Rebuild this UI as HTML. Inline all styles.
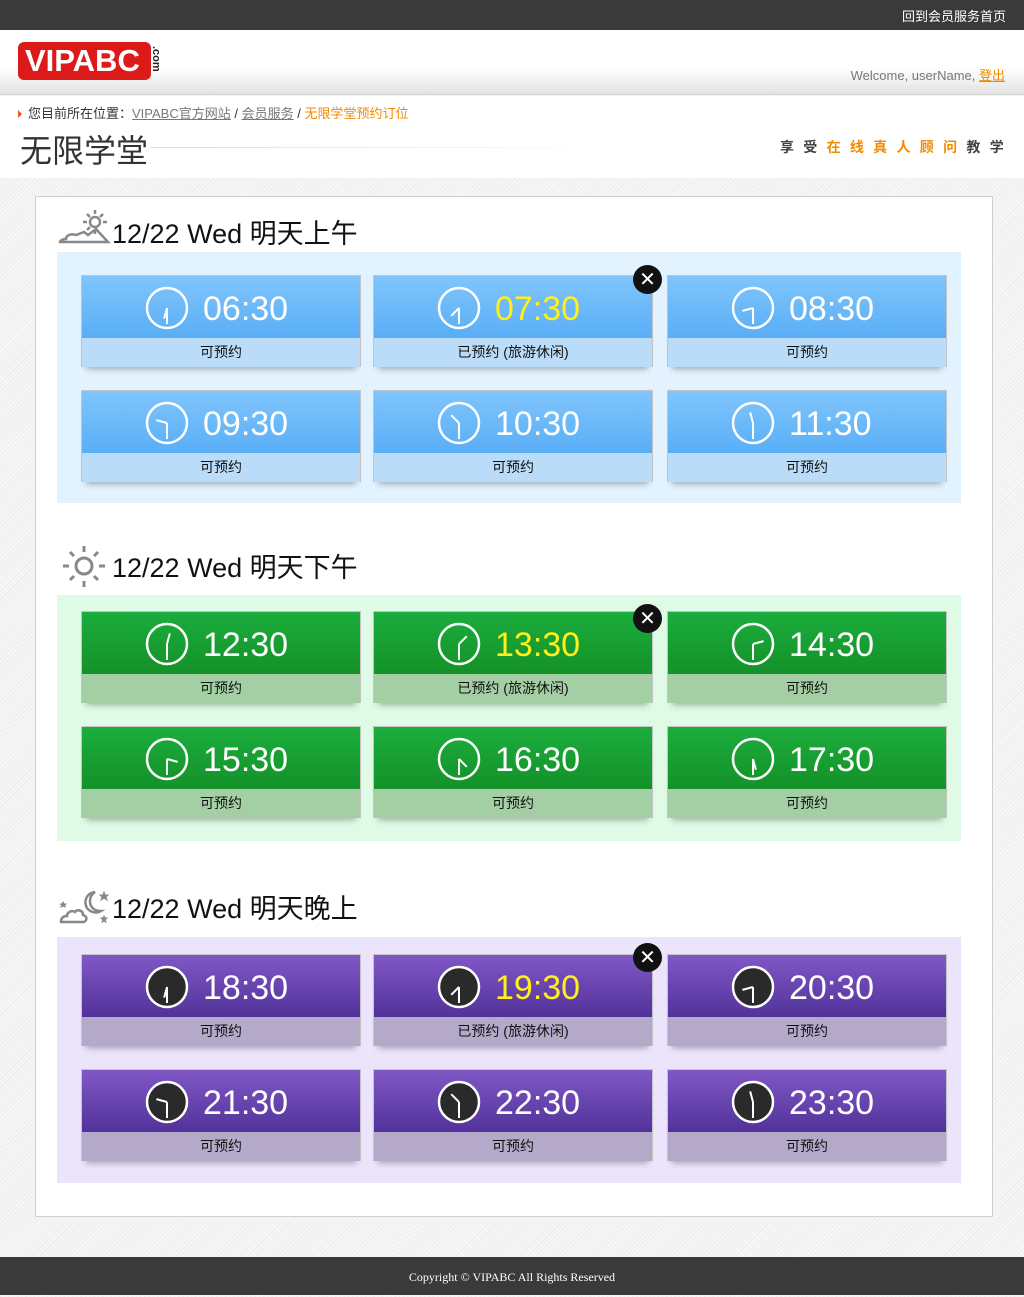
<!DOCTYPE html>
<html><head><meta charset="utf-8"><style>
*{margin:0;padding:0;box-sizing:border-box}
body{width:1024px;height:1295px;position:relative;font-family:"Liberation Sans","Noto Sans CJK SC",sans-serif;background:repeating-linear-gradient(135deg,#f7f7f7 0 1px,#ececec 1px 2px,#f7f7f7 2px 3px);overflow:hidden}
.top{position:absolute;left:0;top:0;width:1024px;height:30px;background:#3a3a3a;color:#fff;font-size:13px;text-align:right;padding:6px 18px 0 0}
.hdr{position:absolute;left:0;top:30px;width:1024px;height:65px;background:linear-gradient(#fff 0,#fff 60%,#e2e2e2 100%);border-bottom:1px solid #d6d6d6}
.logo{position:absolute;left:18px;top:12px;width:133px;height:38px;background:#dd1a1a;border-radius:6px;color:#fff;font:bold 31px "Liberation Sans",sans-serif;line-height:38px;padding-left:7px}
.com{position:absolute;top:16px;left:162px;font:bold 11px "Liberation Sans",sans-serif;color:#222;transform:rotate(90deg);transform-origin:0 0}
.wel{position:absolute;right:19px;top:35px;font-size:13px;color:#777}
.wel a{color:#f08a00;text-decoration:underline}
.sub{position:absolute;left:0;top:96px;width:1024px;height:82px;background:#fff}
.bc{position:absolute;left:18px;top:7px;font-size:13px;color:#333}
.bc u{color:#777}
.bc .o{color:#f08a00}
.tri{display:inline-block;border-left:4px solid #e85a1a;border-top:4px solid transparent;border-bottom:4px solid transparent;margin-right:6px}
.ttl{position:absolute;left:20px;top:30px;font-size:32px;color:#333}
.ln{position:absolute;left:150px;top:51px;width:470px;height:1px;background:linear-gradient(90deg,#ddd,#fff)}
.slog{position:absolute;right:11px;top:41px;font-size:14px;color:#444;letter-spacing:9.3px;font-weight:bold}
.slog span{color:#f08a00}
.box{position:absolute;left:35px;top:196px;width:958px;height:1021px;background:#fff;border:1px solid #cfcfcf}
.h{position:absolute;left:112px;font-size:27px;color:#111}
.panel{position:absolute;left:57px;width:904px;height:251px}
.card{position:absolute;width:280px;height:92px;border:1px solid #c4c4c4;box-shadow:0 7px 6px -5px rgba(0,0,0,.3)}
.card .t{height:62px;position:relative}
.card .b{height:29px;text-align:center;font-size:14px;line-height:29px;color:#111}
.card svg{position:absolute;left:62px;top:9px}
.card .tm{position:absolute;left:121px;top:14px;font-size:34px;color:#fff;font-family:"Liberation Sans",sans-serif}
.card .y{color:#ffef1a}
.bl .t{background:linear-gradient(#80c5fc,#59aef6)}.bl .b{background:#bbdcf8}
.gr .t{background:linear-gradient(#1bad3d,#149128)}.gr .b{background:#a4cfa4}
.pu .t{background:linear-gradient(#8058c6,#52329a)}.pu .b{background:#b4a9c9}
.x{position:absolute;width:29px;height:29px;border-radius:50%;background:#111;color:#fff;font:bold 20px/29px "DejaVu Sans",sans-serif;text-align:center}
.foot{position:absolute;left:0;top:1257px;width:1024px;height:38px;background:#3a3a3a;color:#fff;font:12px "Liberation Serif",serif;text-align:center;line-height:40px}
</style></head><body>
<div class="top">回到会员服务首页</div>
<div class="hdr"><div class="logo">VIPABC</div><div class="com">.com</div>
<div class="wel">Welcome, userName, <a>登出</a></div></div>
<div class="sub">
<div class="bc"><span class="tri"></span>您目前所在位置：<u>VIPABC官方网站</u> / <u>会员服务</u> / <span class="o">无限学堂预约订位</span></div>
<div class="ttl">无限学堂</div><div class="ln"></div>
<div class="slog">享受<span>在线真人顾问</span>教学</div>
</div>
<div class="box"></div>

<svg style="position:absolute;left:57px;top:208px" width="54" height="38" viewBox="0 0 54 38" fill="none" stroke="#888" stroke-width="2.5"><circle cx="38" cy="14" r="5"/><path d="M38 2v4M38 22v4M26 14h4M46 14h4M30 6l3 3M46 6l-3 3M30 22l3-3"/><path d="M3 34h48l-12-13-8 6-4-3-8 3c-6-2-10 1-10 4-4 0-6 2-6 3z"/></svg>
<div class="h" style="top:212px">12/22 Wed 明天上午</div>
<div class="panel" style="top:252px;background:#e2f2fe"></div>

<svg style="position:absolute;left:61px;top:544px" width="46" height="46" viewBox="0 0 46 46" fill="none" stroke="#888" stroke-width="3"><circle cx="23" cy="22" r="8"/><path d="M23 2v6M23 37v6M2 22h6M38 22h6M9 8l4 4M37 8l-4 4M9 36l4-4M37 36l-4-4"/></svg>
<div class="h" style="top:546px">12/22 Wed 明天下午</div>
<div class="panel" style="top:595px;height:246px;background:#dffbe5"></div>

<svg style="position:absolute;left:57px;top:888px" width="54" height="40" viewBox="0 0 54 40" fill="none" stroke="#888" stroke-width="2.5"><path d="M38 4c-8 1-12 9-8 16 3 4 9 6 14 3-7 0-11-4-11-10 0-4 2-7 5-9z"/><path d="M4 34h22c4 0 5-6 0-7 0-5-6-6-8-3-3-2-8 0-8 4-4 0-6 2-6 6z"/><path d="M47 4l1 3 3 0-2 2 1 3-3-2-3 2 1-3-2-2 3 0zM47 28l1 2 2 0-2 2 1 2-2-1-2 1 1-2-2-2 2 0zM6 14l1 2 2 0-1 1 0 2-2-1-2 1 1-2-2-1 2 0z" stroke-width="1" fill="#888"/></svg>
<div class="h" style="top:887px">12/22 Wed 明天晚上</div>
<div class="panel" style="top:937px;height:246px;background:#ebe4fb"></div>

<div class="card bl" style="left:81px;top:275px"><div class="t"><svg width="46" height="46"><circle cx="23" cy="23" r="20" fill="none" stroke="#fff" stroke-width="2.5"/><line x1="23" y1="23" x2="23" y2="39" stroke="#fff" stroke-width="2"/><line x1="23" y1="23" x2="23" y2="12" stroke="#fff" stroke-width="2" transform="rotate(195 23 23)"/></svg><span class="tm">06:30</span></div><div class="b">可预约</div></div>
<div class="card bl" style="left:373px;top:275px"><div class="t"><svg width="46" height="46"><circle cx="23" cy="23" r="20" fill="none" stroke="#fff" stroke-width="2.5"/><line x1="23" y1="23" x2="23" y2="39" stroke="#fff" stroke-width="2"/><line x1="23" y1="23" x2="23" y2="12" stroke="#fff" stroke-width="2" transform="rotate(225 23 23)"/></svg><span class="tm y">07:30</span></div><div class="b">已预约 (旅游休闲)</div></div>
<div class="card bl" style="left:667px;top:275px"><div class="t"><svg width="46" height="46"><circle cx="23" cy="23" r="20" fill="none" stroke="#fff" stroke-width="2.5"/><line x1="23" y1="23" x2="23" y2="39" stroke="#fff" stroke-width="2"/><line x1="23" y1="23" x2="23" y2="12" stroke="#fff" stroke-width="2" transform="rotate(255 23 23)"/></svg><span class="tm">08:30</span></div><div class="b">可预约</div></div>
<div class="card bl" style="left:81px;top:390px"><div class="t"><svg width="46" height="46"><circle cx="23" cy="23" r="20" fill="none" stroke="#fff" stroke-width="2.5"/><line x1="23" y1="23" x2="23" y2="39" stroke="#fff" stroke-width="2"/><line x1="23" y1="23" x2="23" y2="12" stroke="#fff" stroke-width="2" transform="rotate(285 23 23)"/></svg><span class="tm">09:30</span></div><div class="b">可预约</div></div>
<div class="card bl" style="left:373px;top:390px"><div class="t"><svg width="46" height="46"><circle cx="23" cy="23" r="20" fill="none" stroke="#fff" stroke-width="2.5"/><line x1="23" y1="23" x2="23" y2="39" stroke="#fff" stroke-width="2"/><line x1="23" y1="23" x2="23" y2="12" stroke="#fff" stroke-width="2" transform="rotate(315 23 23)"/></svg><span class="tm">10:30</span></div><div class="b">可预约</div></div>
<div class="card bl" style="left:667px;top:390px"><div class="t"><svg width="46" height="46"><circle cx="23" cy="23" r="20" fill="none" stroke="#fff" stroke-width="2.5"/><line x1="23" y1="23" x2="23" y2="39" stroke="#fff" stroke-width="2"/><line x1="23" y1="23" x2="23" y2="12" stroke="#fff" stroke-width="2" transform="rotate(345 23 23)"/></svg><span class="tm">11:30</span></div><div class="b">可预约</div></div>

<div class="card gr" style="left:81px;top:611px"><div class="t"><svg width="46" height="46"><circle cx="23" cy="23" r="20" fill="none" stroke="#fff" stroke-width="2.5"/><line x1="23" y1="23" x2="23" y2="39" stroke="#fff" stroke-width="2"/><line x1="23" y1="23" x2="23" y2="12" stroke="#fff" stroke-width="2" transform="rotate(15 23 23)"/></svg><span class="tm">12:30</span></div><div class="b">可预约</div></div>
<div class="card gr" style="left:373px;top:611px"><div class="t"><svg width="46" height="46"><circle cx="23" cy="23" r="20" fill="none" stroke="#fff" stroke-width="2.5"/><line x1="23" y1="23" x2="23" y2="39" stroke="#fff" stroke-width="2"/><line x1="23" y1="23" x2="23" y2="12" stroke="#fff" stroke-width="2" transform="rotate(45 23 23)"/></svg><span class="tm y">13:30</span></div><div class="b">已预约 (旅游休闲)</div></div>
<div class="card gr" style="left:667px;top:611px"><div class="t"><svg width="46" height="46"><circle cx="23" cy="23" r="20" fill="none" stroke="#fff" stroke-width="2.5"/><line x1="23" y1="23" x2="23" y2="39" stroke="#fff" stroke-width="2"/><line x1="23" y1="23" x2="23" y2="12" stroke="#fff" stroke-width="2" transform="rotate(75 23 23)"/></svg><span class="tm">14:30</span></div><div class="b">可预约</div></div>
<div class="card gr" style="left:81px;top:726px"><div class="t"><svg width="46" height="46"><circle cx="23" cy="23" r="20" fill="none" stroke="#fff" stroke-width="2.5"/><line x1="23" y1="23" x2="23" y2="39" stroke="#fff" stroke-width="2"/><line x1="23" y1="23" x2="23" y2="12" stroke="#fff" stroke-width="2" transform="rotate(105 23 23)"/></svg><span class="tm">15:30</span></div><div class="b">可预约</div></div>
<div class="card gr" style="left:373px;top:726px"><div class="t"><svg width="46" height="46"><circle cx="23" cy="23" r="20" fill="none" stroke="#fff" stroke-width="2.5"/><line x1="23" y1="23" x2="23" y2="39" stroke="#fff" stroke-width="2"/><line x1="23" y1="23" x2="23" y2="12" stroke="#fff" stroke-width="2" transform="rotate(135 23 23)"/></svg><span class="tm">16:30</span></div><div class="b">可预约</div></div>
<div class="card gr" style="left:667px;top:726px"><div class="t"><svg width="46" height="46"><circle cx="23" cy="23" r="20" fill="none" stroke="#fff" stroke-width="2.5"/><line x1="23" y1="23" x2="23" y2="39" stroke="#fff" stroke-width="2"/><line x1="23" y1="23" x2="23" y2="12" stroke="#fff" stroke-width="2" transform="rotate(165 23 23)"/></svg><span class="tm">17:30</span></div><div class="b">可预约</div></div>

<div class="card pu" style="left:81px;top:954px"><div class="t"><svg width="46" height="46"><circle cx="23" cy="23" r="20" fill="#2a2a2a" stroke="#fff" stroke-width="2.5"/><line x1="23" y1="23" x2="23" y2="39" stroke="#fff" stroke-width="2"/><line x1="23" y1="23" x2="23" y2="12" stroke="#fff" stroke-width="2" transform="rotate(195 23 23)"/></svg><span class="tm">18:30</span></div><div class="b">可预约</div></div>
<div class="card pu" style="left:373px;top:954px"><div class="t"><svg width="46" height="46"><circle cx="23" cy="23" r="20" fill="#2a2a2a" stroke="#fff" stroke-width="2.5"/><line x1="23" y1="23" x2="23" y2="39" stroke="#fff" stroke-width="2"/><line x1="23" y1="23" x2="23" y2="12" stroke="#fff" stroke-width="2" transform="rotate(225 23 23)"/></svg><span class="tm y">19:30</span></div><div class="b">已预约 (旅游休闲)</div></div>
<div class="card pu" style="left:667px;top:954px"><div class="t"><svg width="46" height="46"><circle cx="23" cy="23" r="20" fill="#2a2a2a" stroke="#fff" stroke-width="2.5"/><line x1="23" y1="23" x2="23" y2="39" stroke="#fff" stroke-width="2"/><line x1="23" y1="23" x2="23" y2="12" stroke="#fff" stroke-width="2" transform="rotate(255 23 23)"/></svg><span class="tm">20:30</span></div><div class="b">可预约</div></div>
<div class="card pu" style="left:81px;top:1069px"><div class="t"><svg width="46" height="46"><circle cx="23" cy="23" r="20" fill="#2a2a2a" stroke="#fff" stroke-width="2.5"/><line x1="23" y1="23" x2="23" y2="39" stroke="#fff" stroke-width="2"/><line x1="23" y1="23" x2="23" y2="12" stroke="#fff" stroke-width="2" transform="rotate(285 23 23)"/></svg><span class="tm">21:30</span></div><div class="b">可预约</div></div>
<div class="card pu" style="left:373px;top:1069px"><div class="t"><svg width="46" height="46"><circle cx="23" cy="23" r="20" fill="#2a2a2a" stroke="#fff" stroke-width="2.5"/><line x1="23" y1="23" x2="23" y2="39" stroke="#fff" stroke-width="2"/><line x1="23" y1="23" x2="23" y2="12" stroke="#fff" stroke-width="2" transform="rotate(315 23 23)"/></svg><span class="tm">22:30</span></div><div class="b">可预约</div></div>
<div class="card pu" style="left:667px;top:1069px"><div class="t"><svg width="46" height="46"><circle cx="23" cy="23" r="20" fill="#2a2a2a" stroke="#fff" stroke-width="2.5"/><line x1="23" y1="23" x2="23" y2="39" stroke="#fff" stroke-width="2"/><line x1="23" y1="23" x2="23" y2="12" stroke="#fff" stroke-width="2" transform="rotate(345 23 23)"/></svg><span class="tm">23:30</span></div><div class="b">可预约</div></div>

<div class="x" style="left:633px;top:265px">✕</div>
<div class="x" style="left:633px;top:604px">✕</div>
<div class="x" style="left:633px;top:943px">✕</div>

<div class="foot">Copyright © VIPABC All Rights Reserved</div>
</body></html>
